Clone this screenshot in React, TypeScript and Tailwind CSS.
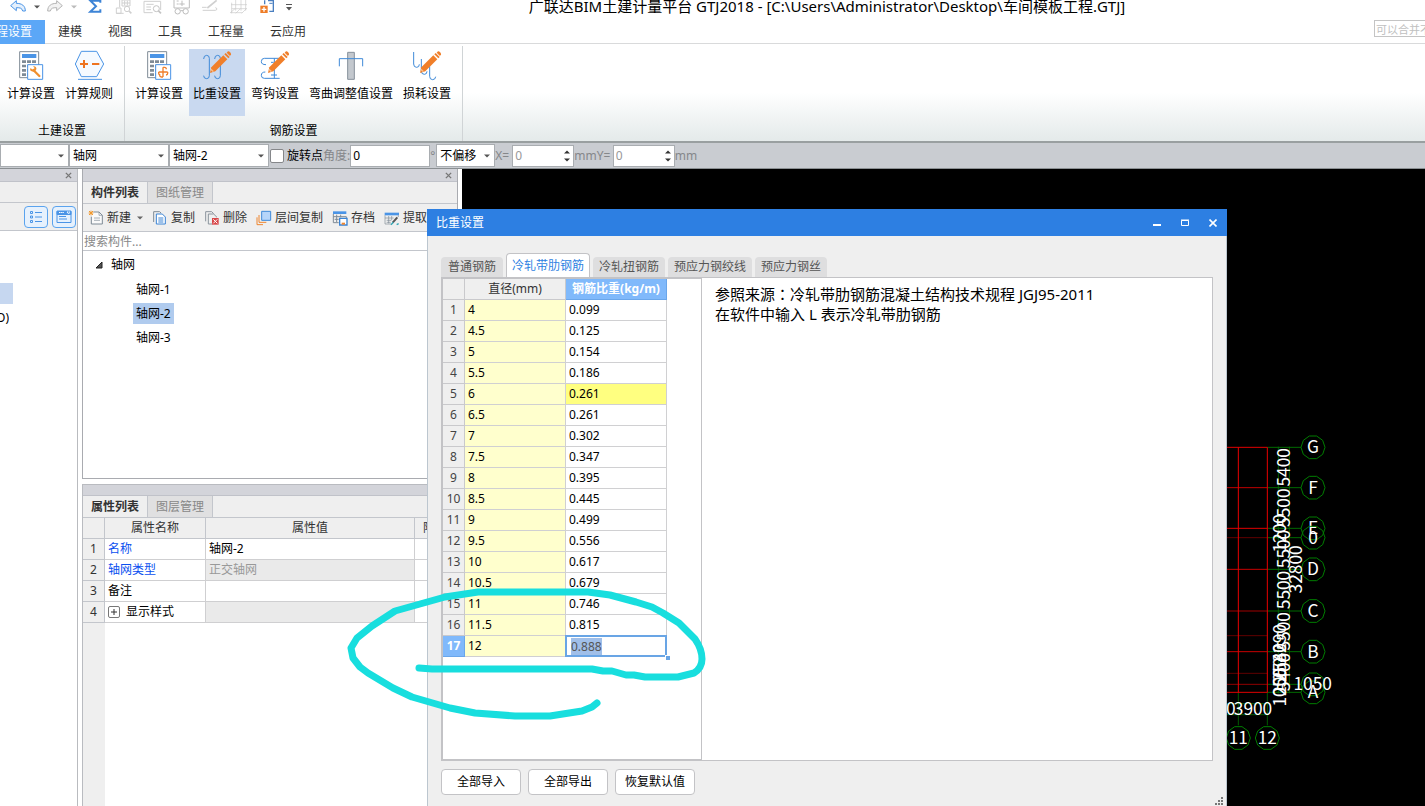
import React from "react";
import clsx from "clsx";

const weights: [string, string][] = [
  ["4", "0.099"],
  ["4.5", "0.125"],
  ["5", "0.154"],
  ["5.5", "0.186"],
  ["6", "0.261"],
  ["6.5", "0.261"],
  ["7", "0.302"],
  ["7.5", "0.347"],
  ["8", "0.395"],
  ["8.5", "0.445"],
  ["9", "0.499"],
  ["9.5", "0.556"],
  ["10", "0.617"],
  ["10.5", "0.679"],
  ["11", "0.746"],
  ["11.5", "0.815"],
  ["12", "0.888"],
];

const menus = ["建模", "视图", "工具", "工程量", "云应用"];

const dialogTabs = [
  "普通钢筋",
  "冷轧带肋钢筋",
  "冷轧扭钢筋",
  "预应力钢绞线",
  "预应力钢丝",
];

const Caret = ({ className }: { className?: string }) => (
  <svg viewBox="0 0 6 4" className={clsx("w-1.5 h-1 shrink-0", className)}>
    <path d="M0 0.5h6L3 3.5z" fill="currentColor" />
  </svg>
);

const CloseMark = () => (
  <svg viewBox="0 0 8 8" className="w-[7px] h-[7px]">
    <path d="M1 1l6 6M7 1L1 7" stroke="#777" strokeWidth="1.6" />
  </svg>
);

/* ---------- quick access bar ---------- */

const QuickIcon = ({
  label,
  children,
}: {
  label: string;
  children: React.ReactNode;
}) => (
  <button aria-label={label} className="w-[29px] flex justify-center">
    <svg viewBox="0 0 84 60" className="w-7 h-5" fill="none" strokeWidth="3">
      {children}
    </svg>
  </button>
);

const QuickAccess = () => (
  <div className="w-[296px] shrink-0 flex items-start pl-1.5">
    <button aria-label="撤销" className="w-6 flex justify-center">
      <svg viewBox="0 0 54 60" className="w-[18px] h-5" fill="#e4f0fd" stroke="#4a94e6" strokeWidth="3">
        <path d="M5 17L22 2v8c16 0 27 7 27 23h-8c-2-9-8-10-19-10v9z" />
      </svg>
    </button>
    <button aria-label="撤销列表" className="w-[14px] h-5 flex justify-center pt-[5px] text-[#555]">
      <Caret />
    </button>
    <button aria-label="恢复" className="w-6 flex justify-center">
      <svg viewBox="0 0 54 60" className="w-[18px] h-5" fill="#f2f2f2" stroke="#b4b4b4" strokeWidth="3">
        <path d="M49 17L32 2v8C16 10 5 17 5 33h8c2-9 8-10 19-10v9z" />
      </svg>
    </button>
    <button aria-label="恢复列表" className="w-[14px] h-5 flex justify-center pt-[5px] text-[#bbb]">
      <Caret />
    </button>
    <QuickIcon label="汇总">
      <path d="M55 8V2H25l17 17-17 16h30v-7" stroke="#3d84d6" strokeWidth="6" />
    </QuickIcon>
    <QuickIcon label="查看工程量">
      <path d="M29 0v22M19 24h14v16H19zM19 40h22M36 0h24v18H36zM44 2v14M52 2v14M36 9h24" stroke="#cfcfcf" />
      <circle cx="51" cy="27" r="8" stroke="#cfcfcf" />
      <path d="M57 33l7 7" stroke="#cfcfcf" strokeWidth="5" />
    </QuickIcon>
    <QuickIcon label="查看计算式">
      <path d="M15 4h50v26M15 4v34h26M22 13h22M22 21h14M22 29h14" stroke="#cfcfcf" />
      <circle cx="52" cy="26" r="9" stroke="#c4c4c4" />
      <path d="M58 32l8 8" stroke="#c4c4c4" strokeWidth="5" />
    </QuickIcon>
    <QuickIcon label="查看钢筋量">
      <path d="M18 0v24h46V0M26 3h6M26 12h6M34 12h16M42 2v16" stroke="#bdbdbd" />
      <circle cx="29" cy="34" r="8" stroke="#bdbdbd" />
      <circle cx="53" cy="34" r="8" stroke="#bdbdbd" />
      <path d="M37 32h8" stroke="#bdbdbd" />
    </QuickIcon>
    <QuickIcon label="编辑钢筋">
      <path d="M18 22h14M20 31h38c6 0 6-8 0-8" stroke="#d0d0d0" />
      <path d="M34 24L62 1" stroke="#d0d0d0" strokeWidth="5" />
    </QuickIcon>
    <QuickIcon label="钢筋三维">
      <path d="M20 8v32M32 0v32M48 0v32M62 0v32M18 14h48M20 26h46M16 38l14-12M32 40l14-14M50 40l14-14M16 38h36" stroke="#c9c9c9" strokeWidth="2" />
    </QuickIcon>
    <QuickIcon label="新增">
      <path d="M32 1v12M42 2h16v32H46" stroke="#4a7fc0" strokeWidth="4" />
      <path d="M46 10h10" stroke="#4a7fc0" strokeWidth="3" />
      <path d="M19 17h22v22H19z" fill="#ee7d28" />
      <path d="M30 21v14M23 28h14" stroke="#fff" strokeWidth="4" />
    </QuickIcon>
    <button aria-label="更多" className="w-[14px] h-5 flex justify-center pt-1 text-[#555]">
      <svg viewBox="0 0 6 7" className="w-1.5 h-[7px]">
        <path d="M0 0h6v1H0zM0 3h6L3 6.500z" fill="currentColor" />
      </svg>
    </button>
  </div>
);

/* ---------- ribbon ---------- */

const Pencil = () => (
  <g stroke="none" fill="#f07f2a">
    <path d="M27 69l4-17 36-36 12 12-36 36z" />
    <path d="M70 13l4-4 12 12-4 4z" />
    <path d="M77 8l4-4c2-2 10 4 9 9l-3 5z" />
    <path d="M31 56l8 8-4 2-6-6z" fill="#f7c090" />
  </g>
);

const Calculator = ({ children }: { children: React.ReactNode }) => (
  <>
    <path d="M14 5h57v78H14z" fill="#fff" stroke="#7f8b96" />
    <path d="M21 12h43v12H21z" fill="#4a94e6" />
    <path d="M21 35h43M21 48h43M21 61h43M21 74h43" stroke="#7f8b96" strokeWidth="8" strokeDasharray="12 3" />
    <path d="M38 44h45v44H38z" fill="#fff" stroke="#4a94e6" />
    {children}
  </>
);

const icons = {
  calc: (
    <Calculator>
      <path d="M55 60l18 18" stroke="#f0902f" strokeWidth="7" strokeLinecap="round" />
      <path d="M47 54l6 6 6-6-5-5c6-2 12 3 10 9-2 7-9 9-14 6-5-2-6-6-3-10z" fill="#f0902f" />
    </Calculator>
  ),
  rule: (
    <>
      <path d="M7 42L25 4h46l21 38-21 38H25z" fill="#f5faff" stroke="#4a94e6" />
      <path d="M15 88h72" stroke="#4a94e6" />
      <path d="M21 42h24M33 30v24M57 42h22" stroke="#ee7420" strokeWidth="6" />
    </>
  ),
  calcBar: (
    <Calculator>
      <path d="M60 52v29M47 66h27M60 52h5q5 0 5 6M60 81h-5q-5 0-5-5M47 66v4q0 5 5 5M74 66v4q0 5-5 5" stroke="#f07f2a" strokeWidth="4" />
    </Calculator>
  ),
  weight: (
    <>
      <path d="M8 27q0-11 9-11 8 0 8 9v52q0 9-8 9-9 0-9-9M41 27q0-11 9-11 8 0 8 9v52q0 9-8 9-9 0-9-9" stroke="#3f8ad8" />
      <Pencil />
    </>
  ),
  hook: (
    <>
      <path d="M60 25H16q-9 0-9 10 0 9 14 9M62 85H16q-9 0-9-9 0-10 12-10M46 25v60M36 37h8M36 75h18" stroke="#3f8ad8" />
      <Pencil />
    </>
  ),
  bend: (
    <>
      <path d="M38 7h20v81H38z" fill="#c3c8ce" stroke="#87919b" />
      <path d="M13 49V26h70v23" stroke="#3f8ad8" />
    </>
  ),
  loss: (
    <>
      <path d="M8 6v36q0 10 9 10 8 0 8-9M31 27v36q0 10 9 10 8 0 8-9M56 49v30q0 10 9 10 8 0 9-9" stroke="#3f8ad8" />
      <Pencil />
    </>
  ),
};

const RibbonButton = ({
  icon,
  label,
  active,
}: {
  icon: keyof typeof icons;
  label: string;
  active?: boolean;
}) => (
  <button
    className={clsx(
      "h-[67px] px-1 pt-px flex flex-col items-center",
      active && "bg-[#c9d9f0]"
    )}
  >
    <svg viewBox="0 0 96 96" className="w-8 h-8" fill="none" strokeWidth="3">
      {icons[icon]}
    </svg>
    <span className="leading-5 mt-0.5">{label}</span>
  </button>
);

const Ribbon = () => (
  <div className="h-[97px] shrink-0 flex pt-0.5 text-black bg-linear-to-b from-white from-50% to-[#e4eaea]">
    <section className="w-[125px] flex flex-col border-r border-[#d0d4d6]">
      <div className="flex gap-0.5 pl-[3px] pt-[3px]">
        <RibbonButton icon="calc" label="计算设置" />
        <RibbonButton icon="rule" label="计算规则" />
      </div>
      <p className="mt-auto text-center leading-5">土建设置</p>
    </section>
    <section className="flex flex-col border-r border-[#d0d4d6]">
      <div className="flex gap-0.5 pl-1.5 pr-[7px] pt-[3px]">
        <RibbonButton icon="calcBar" label="计算设置" />
        <RibbonButton icon="weight" label="比重设置" active />
        <RibbonButton icon="hook" label="弯钩设置" />
        <RibbonButton icon="bend" label="弯曲调整值设置" />
        <RibbonButton icon="loss" label="损耗设置" />
      </div>
      <p className="mt-auto text-center leading-5">钢筋设置</p>
    </section>
  </div>
);

/* ---------- option bar ---------- */

const Combo = ({
  label,
  value,
  className,
}: {
  label: string;
  value: string;
  className: string;
}) => (
  <div className={clsx("relative h-[23px] shrink-0 text-black", className)}>
    <select
      aria-label={label}
      defaultValue={value}
      className="appearance-none w-full h-full pl-[3px] bg-white border border-[#a9adb1]"
    >
      <option value={value}>{value}</option>
    </select>
    <Caret className="absolute right-[5px] top-[10px] text-[#555] pointer-events-none" />
  </div>
);

const Spinner = ({ id }: { id: string }) => (
  <div className="w-[62px] h-[22px] flex bg-white border border-[#a9adb1]">
    <input id={id} type="text" defaultValue="0" className="min-w-0 flex-1 pl-0.5 text-[#999]" />
    <div className="w-3 flex flex-col justify-between items-center py-1 text-[#333]">
      <button aria-label="增加">
        <Caret className="rotate-180 block" />
      </button>
      <button aria-label="减少">
        <Caret className="block" />
      </button>
    </div>
  </div>
);

const OptionBar = () => (
  <div className="h-7 shrink-0 flex items-center bg-[#c9ccd1] border-t-2 border-t-[#999fa0] border-b border-b-[#8a8f92] text-[#85878a]">
    <Combo label="楼层" value="" className="w-[69px]" />
    <Combo label="构件类型" value="轴网" className="w-[100px]" />
    <Combo label="构件" value="轴网-2" className="w-[100px]" />
    <label className="flex items-center gap-[3px] pl-px text-black">
      <input type="checkbox" className="appearance-none w-3.5 h-3.5 bg-white border border-[#85878a] rounded-xs" />
      旋转点
    </label>
    <label htmlFor="angle">角度:</label>
    <input id="angle" type="text" defaultValue="0" className="w-20 h-[22px] pl-0.5 bg-white border border-[#a9adb1] text-black" />
    <span className="w-1.5">°</span>
    <Combo label="偏移方式" value="不偏移" className="w-[59px]" />
    <label htmlFor="offset-x" className="w-[17px]">X=</label>
    <Spinner id="offset-x" />
    <span>mm</span>
    <label htmlFor="offset-y" className="w-4">Y=</label>
    <Spinner id="offset-y" />
    <span>mm</span>
  </div>
);

/* ---------- docked panels ---------- */

const PanelCaption = ({ closable }: { closable?: boolean }) => (
  <div
    className={clsx(
      "shrink-0 flex items-center justify-end pr-[5px] bg-[#d3d4da] border-b border-[#c0c2c9]",
      closable ? "h-[13px]" : "h-[11px]"
    )}
  >
    {closable && (
      <button aria-label="关闭">
        <CloseMark />
      </button>
    )}
  </div>
);

const PanelTabs = ({ tabs }: { tabs: [string, string] }) => (
  <div className="h-[22px] shrink-0 flex bg-[#efefef] border-b border-[#c3c6cc]">
    <button className="px-2 border-r border-[#c3c6cc] font-bold text-[#333]">{tabs[0]}</button>
    <button className="px-2 border-r border-[#c3c6cc] bg-[#e0e0e1] text-[#888]">{tabs[1]}</button>
  </div>
);

const TreePanel = () => (
  <aside className="w-[78px] shrink-0 flex flex-col bg-[#efefef] border-r border-[#b9bbbf]">
    <PanelCaption closable />
    <div className="h-[21px] border-b border-[#c3c6cc]" />
    <div className="h-7 flex items-center justify-end gap-1 pr-px border-b border-[#c3c6cc]">
      <button aria-label="列表" className="w-6 h-[22px] flex items-center justify-center rounded-sm border border-[#5aa3ee] bg-[#e6f1fd]">
        <svg viewBox="0 0 14 14" className="w-3.5 h-3.5" fill="none" stroke="#4a94e6">
          <path d="M1.500 1.500h2v2h-2zM1.500 6h2v2h-2zM1.500 10.500h2v2h-2zM6 2.500h7M6 7h7M6 11.500h7" />
        </svg>
      </button>
      <button aria-label="图标" className="w-6 h-[22px] flex items-center justify-center rounded-sm border border-[#5aa3ee] bg-[#e6f1fd]">
        <svg viewBox="0 0 16 14" className="w-4 h-3.5" fill="none" stroke="#4a94e6">
          <path d="M1 1.500h14v11H1zM3 6.500h7M3 9h8" />
          <path d="M1 1h14v3.500H1z" fill="#4a94e6" />
          <path d="M3 2.500h5M11 2h3l-1.500 2z" stroke="#fff" strokeDasharray="1.500 .6" />
        </svg>
      </button>
    </div>
    <div className="flex-1 pt-[52px] bg-white text-black">
      <div className="w-[13px] h-[21px] bg-[#c6d7f0]" />
      <div className="w-[9px] h-7 flex items-center justify-end overflow-hidden">
        <span className="whitespace-nowrap">轴网(O)</span>
      </div>
    </div>
  </aside>
);

const toolIcons = {
  create: (
    <>
      <path d="M16 6h17l10 10v26H10V20" fill="#fafafa" stroke="#7f8b96" />
      <path d="M33 6v10h10M18 24h18M18 31h18" stroke="#7f8b96" strokeWidth="2" />
      <path d="M3 3l12 12M15 3L3 15M9 2v14M2 9h14" stroke="#f2992e" />
    </>
  ),
  copy: (
    <>
      <path d="M5 36V5h18l4 4" stroke="#7f8b96" />
      <path d="M13 12h18l9 9v21H13z" fill="#fff" stroke="#3a83d4" />
      <path d="M19 24h15M19 30h15M19 36h15" stroke="#3a83d4" />
    </>
  ),
  remove: (
    <>
      <path d="M5 34V5h18l6 6" stroke="#8b949d" />
      <path d="M25 42H13V12h16l10 10" stroke="#8b949d" />
      <path d="M24 24h20v20H24z" fill="#d9484a" />
      <path d="M28 28l12 12M40 28L28 40" stroke="#fff" />
    </>
  ),
  layers: (
    <>
      <path d="M3 22v22h18" stroke="#ee8630" />
      <path d="M9 15v22h22" stroke="#ee8630" />
      <path d="M17 4h27v27H17z" fill="#b5d5fa" stroke="#3f8ad8" />
    </>
  ),
  save: (
    <>
      <path d="M3 4h40v8H3z" fill="#4a94e6" />
      <path d="M4 12v26h16M4 20h39v4M8 28h12M14 14v22M26 14v8" stroke="#7f8b96" />
      <path d="M23 25h22v20H23z" fill="#fff" stroke="#3a83d4" strokeWidth="4" />
      <path d="M29 38h10v6H29z" fill="#ee8630" />
    </>
  ),
  extract: (
    <>
      <path d="M2 8h43v8H2z" fill="#4a94e6" />
      <path d="M3 16v26h18M3 24h26M8 31h14M8 37h12M14 18v22M23 18v12M43 16v5" stroke="#7f8b96" strokeWidth="2" />
      <path d="M26 38l14-16" stroke="#555" strokeWidth="6" />
      <path d="M21 44l7-7M38 44l6-3" stroke="#2fa7b5" strokeWidth="4" />
    </>
  ),
};

const ToolButton = ({
  icon,
  label,
  menu,
}: {
  icon: keyof typeof toolIcons;
  label: string;
  menu?: boolean;
}) => (
  <button className="shrink-0 flex items-center gap-[3px]">
    <svg viewBox="0 0 48 48" className="w-4 h-4" fill="none" strokeWidth="3">
      {toolIcons[icon]}
    </svg>
    {label}
    {menu && <Caret className="ml-[3px] text-[#666]" />}
  </button>
);

const ComponentList = () => (
  <section className="h-[310px] shrink-0 flex flex-col border-x border-b border-[#a9abb0]">
    <PanelCaption closable />
    <PanelTabs tabs={["构件列表", "图纸管理"]} />
    <div className="h-7 shrink-0 flex items-center gap-[9px] pl-[5px] pt-px overflow-hidden bg-[#efefef] border-b border-[#c3c6cc] text-[#333]">
      <ToolButton icon="create" label="新建" menu />
      <ToolButton icon="copy" label="复制" />
      <ToolButton icon="remove" label="删除" />
      <ToolButton icon="layers" label="层间复制" />
      <ToolButton icon="save" label="存档" />
      <ToolButton icon="extract" label="提取" />
    </div>
    <input
      type="text"
      aria-label="搜索构件"
      placeholder="搜索构件..."
      className="h-[19px] shrink-0 px-px border-b border-[#c3c6cc] placeholder:text-[#888]"
    />
    <ul className="flex-1 pt-0.5 bg-white text-black">
      <li>
        <div className="h-6 pl-3 flex items-center gap-2">
          <svg viewBox="0 0 8 8" className="w-2 h-2">
            <path d="M1 7h6V1z" fill="#555" stroke="#222" />
          </svg>
          轴网
        </div>
        <ul className="pl-[50px]">
          {["轴网-1", "轴网-2", "轴网-3"].map((name) => (
            <li key={name} className="h-6 flex items-center">
              <span
                className={clsx(
                  "h-[21px] px-[3px] leading-[21px]",
                  name === "轴网-2" && "bg-[#b0cbee]"
                )}
              >
                {name}
              </span>
            </li>
          ))}
        </ul>
      </li>
    </ul>
  </section>
);

const PropertyList = () => (
  <section className="flex-1 min-h-0 flex flex-col overflow-hidden border-x border-t border-[#b9bbc0]">
    <PanelCaption />
    <PanelTabs tabs={["属性列表", "图层管理"]} />
    <div className="flex-1 bg-[linear-gradient(to_right,#efefef_22px,white_22px)]">
      <table className="table-fixed w-full border-separate border-spacing-0 text-black [&_td]:border-r [&_td]:border-b [&_td]:border-[#cfcfd1] [&_th]:border-r [&_th]:border-b [&_th]:border-[#c3c6cc] [&_th]:bg-[#efefef] [&_th]:font-normal [&_th]:text-[#333]">
        <colgroup>
          <col className="w-[22px]" />
          <col className="w-[101px]" />
          <col className="w-[209px]" />
          <col />
        </colgroup>
        <thead>
          <tr className="h-[21px]">
            <th />
            <th>属性名称</th>
            <th>属性值</th>
            <th className="text-left pl-2">附加</th>
          </tr>
        </thead>
        <tbody>
          <tr className="h-[21px]">
            <th>1</th>
            <td className="pl-[3px] text-[#0a50f0]">名称</td>
            <td className="pl-[3px]">轴网-2</td>
            <td />
          </tr>
          <tr className="h-[21px]">
            <th>2</th>
            <td className="pl-[3px] text-[#0a50f0]">轴网类型</td>
            <td className="pl-[3px] bg-[#eaeaea] text-[#999]">正交轴网</td>
            <td />
          </tr>
          <tr className="h-[21px]">
            <th>3</th>
            <td className="pl-[3px]">备注</td>
            <td />
            <td />
          </tr>
          <tr className="h-[21px]">
            <th>4</th>
            <td className="pl-[3px]">
              <div className="flex items-center gap-1.5">
                <button aria-label="展开" className="w-3 h-3 flex items-center justify-center border border-[#777] rounded-xs">
                  <svg viewBox="0 0 6 6" className="w-1.5 h-1.5">
                    <path d="M0 3h6M3 0v6" stroke="#333" />
                  </svg>
                </button>
                显示样式
              </div>
            </td>
            <td className="bg-[#eaeaea]" />
            <td />
          </tr>
        </tbody>
      </table>
    </div>
  </section>
);

/* ---------- drawing canvas ---------- */

const Bubble = ({ x, y, text }: { x: number; y: number; text?: string }) => (
  <g>
    <polygon
      points="36,0 29,21 11,34 -11,34 -29,21 -36,0 -29,-21 -11,-34 11,-34 29,-21"
      transform={`translate(${x} ${y})`}
      stroke="#007d00"
    />
    {text && (
      <text x={x} y={y + 18}>
        {text}
      </text>
    )}
  </g>
);

const axes: [number, string, string?][] = [
  [82, "#e00000", "G"],
  [203, "#c00000", "F"],
  [325, "#e00000", "E"],
  [353, "#600000", "0"],
  [448, "#c80000", "D"],
  [573, "#a00000", "C"],
  [695, "#c80000", "B"],
  [793, "#900000"],
  [817, "#e00000", "A"],
];

const dims: [number, number, string][] = [
  [477, 142, "5400"],
  [477, 263, "5500"],
  [477, 387, "5500"],
  [477, 510, "5500"],
  [477, 634, "5500"],
  [477, 756, "5400"],
  [463, 340, "1200"],
  [513, 448, "32800"],
  [463, 670, "3290"],
  [463, 727, "2540"],
  [463, 770, "2050"],
  [463, 802, "1050"],
];

const AxisGrid = () => (
  <svg
    viewBox="0 0 900 1158"
    className="w-[300px] h-[386px] shrink-0"
    fill="none"
    strokeWidth="3"
  >
    <path d="M460 80v740M493 80v740M340 818v98M427 818v98M250 851h180M250 884h180" stroke="#005c00" />
    {axes.map(([y, color]) => (
      <g key={y}>
        <path d={`M0 ${y}h427`} stroke={color} />
        <path d={`M427 ${y}h101`} stroke="#006a00" />
      </g>
    ))}
    <path d="M0 647h427M0 760h427" stroke="#600000" />
    <path d="M340 82v736M427 82v736" stroke="#e80000" />
    <g fontSize="52" textAnchor="middle" className="font-['Noto_Sans_CJK_SC',sans-serif] [&_text]:fill-white">
      {axes.map(([y, , text]) => (
        <Bubble key={y} x={564} y={y} text={text} />
      ))}
      <Bubble x={340} y={954} text="11" />
      <Bubble x={427} y={954} text="12" />
      {dims.map(([x, y, text], i) => (
        <text key={i} transform={`translate(${x + 19} ${y}) rotate(-90)`}>
          {text}
        </text>
      ))}
      <text x="563" y="811">1050</text>
      <text x="384" y="885">3900</text>
      <text x="274" y="885">3900</text>
    </g>
  </svg>
);

/* ---------- dialog ---------- */

const WeightTable = () => (
  <table className="table-fixed w-56 border-separate border-spacing-0 text-black [&_td]:border-r [&_td]:border-b [&_td]:border-[#d0d0d2]">
    <colgroup>
      <col className="w-[22px]" />
      <col className="w-[101px]" />
      <col className="w-[101px]" />
    </colgroup>
    <thead>
      <tr className="h-[21px] text-[#333]">
        <th className="bg-[#efefef] border-r border-b border-[#c9c9cc]" />
        <th className="bg-[#efefef] border-r border-b border-[#c9c9cc] font-normal">直径(mm)</th>
        <th className="bg-[#80b9fb] border-r border-b border-[#6aa6ea] text-white whitespace-nowrap">
          钢筋比重(kg/m)
        </th>
      </tr>
    </thead>
    <tbody>
      {weights.map(([diameter, weight], i) => {
        const editing = i === weights.length - 1;
        return (
          <tr key={diameter} className="h-[21px]">
            <th
              className={clsx(
                "border-r border-b",
                editing
                  ? "bg-[#80b9fb] border-[#6aa6ea] text-white"
                  : "bg-[#efefef] border-[#c9c9cc] font-normal text-[#444]"
              )}
            >
              {i + 1}
            </th>
            <td className="pl-[3px] bg-[#ffffcd]">{diameter}</td>
            {editing ? (
              <td className="relative">
                <div className="absolute -inset-px border-2 border-[#69a5e5] bg-white flex items-center pl-1">
                  <input
                    type="text"
                    aria-label="钢筋比重"
                    defaultValue={weight}
                    className="[field-sizing:content] h-[17px] bg-[#a0bfe9] text-[#555]"
                  />
                </div>
                <span className="absolute -right-1 -bottom-1 w-[5px] h-[5px] bg-[#69a5e5] border-t border-l border-white" />
              </td>
            ) : (
              <td className={clsx("pl-[3px]", diameter === "6" && "bg-[#ffff80]")}>{weight}</td>
            )}
          </tr>
        );
      })}
    </tbody>
  </table>
);

const WeightDialog = () => (
  <div role="dialog" aria-label="比重设置" className="absolute left-[427px] top-[209px] bottom-0 w-[800px] flex flex-col bg-[#efefef]">
    <header className="h-[27px] shrink-0 flex items-center justify-between pl-[9px] bg-[#2d7fe2] text-white">
      <h2>比重设置</h2>
      <div className="flex">
        <button aria-label="最小化" className="w-7 flex justify-center">
          <svg viewBox="0 0 8 8" className="w-2 h-2">
            <path d="M0 6h8" stroke="#fff" strokeWidth="2" />
          </svg>
        </button>
        <button aria-label="最大化" className="w-7 flex justify-center">
          <svg viewBox="0 0 8 8" className="w-2 h-2" fill="none" stroke="#fff">
            <path d="M.5 1.500h7v5h-7zM0 1h8" />
          </svg>
        </button>
        <button aria-label="关闭" className="w-7 flex justify-center">
          <svg viewBox="0 0 8 8" className="w-2 h-2">
            <path d="M.5 .5l7 7M7.500 .5l-7 7" stroke="#fff" strokeWidth="1.600" />
          </svg>
        </button>
      </div>
    </header>
    <div className="flex-1 min-h-0 flex flex-col px-[13px] pt-[17px] pb-[11px] border-x border-[#bcc6cf]">
      <div className="h-6 shrink-0 flex items-end gap-[3px]">
        {dialogTabs.map((tab, i) => (
          <button
            key={tab}
            className={clsx(
              "rounded-t-sm whitespace-nowrap",
              i === 1
                ? "h-[25px] -mb-px px-[5px] bg-white border border-b-0 border-[#c3c3c6] text-[#2d7fe2]"
                : "h-5 min-w-[62px] px-1.5 bg-[#dededf] text-[#555]"
            )}
          >
            {tab}
          </button>
        ))}
      </div>
      <div className="flex-1 min-h-0 flex bg-white border border-[#c3c3c6]">
        <div className="w-[260px] shrink-0 border border-[#c3c3c6]">
          <WeightTable />
        </div>
        <div className="flex-1 pl-[13px] pt-1.5 text-[15px] leading-5 text-black">
          <p>
            参照来源
            <span className="font-['Noto_Sans_CJK_TC',sans-serif]" lang="zh-Hant">：</span>
            冷轧带肋钢筋混凝土结构技术规程 JGJ95-2011
          </p>
          <p>在软件中输入 L 表示冷轧带肋钢筋</p>
        </div>
      </div>
      <div className="shrink-0 flex gap-[7px] pt-2">
        {["全部导入", "全部导出", "恢复默认值"].map((label) => (
          <button key={label} className="w-20 h-[26px] bg-white border border-[#c3c3c6] rounded-sm text-black">
            {label}
          </button>
        ))}
      </div>
    </div>
    <svg viewBox="0 0 8 8" className="absolute right-1 bottom-px w-2 h-2" fill="#777">
      <path d="M6 0h2v2H6zM3 3h2v2H3zM6 3h2v2H6zM0 6h2v2H0zM3 6h2v2H3zM6 6h2v2H6z" />
    </svg>
  </div>
);

// hand-drawn circle round the last rows of the table
const Scribble = () => (
  <svg
    viewBox="340 580 380 150"
    className="absolute left-[340px] top-[580px] w-[380px] h-[150px] pointer-events-none"
    fill="none"
    stroke="#18dede"
    strokeWidth="7"
    strokeLinecap="round"
    strokeLinejoin="round"
  >
    <path d="M419 668L432 669H592L603 671H612L626 675H634L645 677H678L694 673Q702 668 702 659Q702 649 695 639L679 623L663 613L652 607L636 602L610 595L588 592H478L445 597L395 611L372 626L357 638L351 648L353 658L360 667L368 673L393 688L412 697L450 708L475 713L515 716H550L582 711L592 707L597 703" />
  </svg>
);

export default function App() {
  return (
    <div className="relative h-screen flex flex-col overflow-hidden bg-white text-xs whitespace-nowrap font-['Noto_Sans','Noto_Sans_CJK_SC',sans-serif]">
      <div className="h-5 shrink-0 flex overflow-hidden">
        <QuickAccess />
        <h1 className="flex-1 pr-[67px] text-center text-[15px] leading-3 text-black">
          广联达BIM土建计量平台 GTJ2018 - [C:\Users\Administrator\Desktop\车间模板工程.GTJ]
        </h1>
      </div>
      <nav className="h-6 shrink-0 flex border-b border-[#d9dadb] text-[#333]">
        <button className="w-[45px] h-6 pr-[13px] flex items-center justify-end overflow-hidden bg-[#5ba7f7] text-white">
          <span>工程设置</span>
        </button>
        {menus.map((menu) => (
          <button key={menu} className="px-[13px] pt-px">
            {menu}
          </button>
        ))}
        <input
          type="text"
          aria-label="搜索"
          placeholder="可以合并不同"
          className="ml-auto w-[51px] h-[17px] pt-0.5 pl-px border border-r-0 border-[#c4c4c4] text-[11px] placeholder:text-[#c0c0c0]"
        />
      </nav>
      <Ribbon />
      <OptionBar />
      <main className="flex-1 min-h-0 flex">
        <TreePanel />
        <div className="w-[376px] shrink-0 ml-1 flex flex-col gap-[5px]">
          <ComponentList />
          <PropertyList />
        </div>
        <div className="flex-1 ml-1 flex items-end justify-end overflow-hidden bg-black">
          <AxisGrid />
        </div>
      </main>
      <WeightDialog />
      <Scribble />
    </div>
  );
}
